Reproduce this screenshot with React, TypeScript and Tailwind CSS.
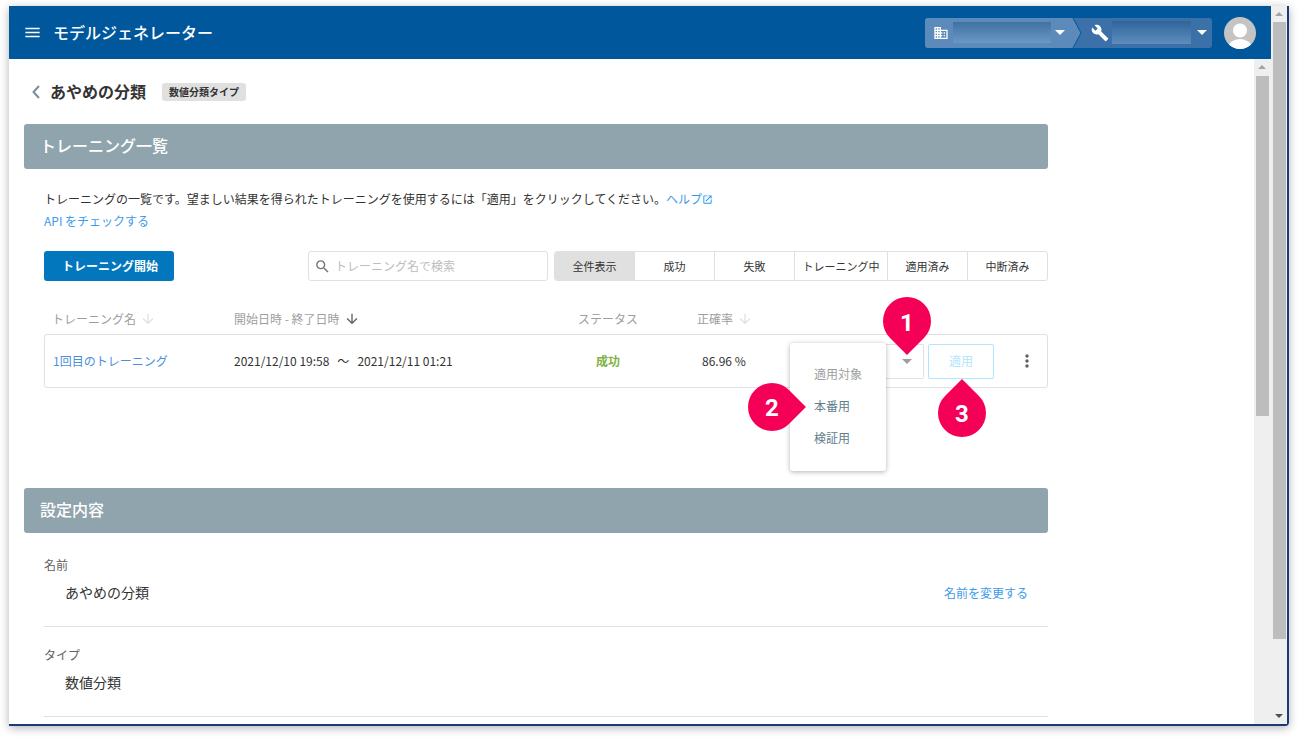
import { MdMenu, MdBuild, MdDomain, MdArrowDownward, MdMoreVert, MdSearch, MdOpenInNew } from 'react-icons/md';

const filters = [
  { name: '全件表示', width: 'w-[79px]', active: true },
  { name: '成功', width: 'w-[80px]' },
  { name: '失敗', width: 'w-[80px]' },
  { name: 'トレーニング中', width: 'w-[93px]' },
  { name: '適用済み', width: 'w-[80px]' },
  { name: '中断済み', width: 'w-[80px]' },
];

function Caret({ className }: { className: string }) {
  return <span className={`w-0 h-0 border-x-[5px] border-x-transparent border-t-[5px] ${className}`} />;
}

function SectionHead({ title }: { title: string }) {
  return (
    <div className="h-[45px] w-[1024px] ml-[15px] pl-[16px] pb-[4px] flex items-center bg-[#90a4ae] rounded-[3px] text-white text-base font-medium">
      {title}
    </div>
  );
}

function Pin({ label, className, rotate, textClass }: { label: string; className: string; rotate: string; textClass?: string }) {
  return (
    <div className={`absolute w-[48px] h-[48px] ${className}`}>
      <div className={`absolute inset-0 bg-[#f50057] rounded-full rounded-br-none ${rotate}`} />
      <span className={`absolute inset-0 flex items-center justify-center text-white text-2xl font-bold font-['Roboto',sans-serif] ${textClass ?? ''}`}>{label}</span>
    </div>
  );
}

export default function App() {
  return (
    <div className="relative w-[1298px] h-[738px] overflow-hidden bg-white text-[#333] font-['Noto_Sans_CJK_JP','Roboto',sans-serif]">
      <div className="absolute left-[9px] top-[6px] w-[1280px] h-[720px] flex bg-white border-r-2 border-b-2 border-[#1d3a78] rounded-br-[4px] shadow-[0_2px_10px_rgba(0,0,0,0.3)]">
        <div className="w-[1262px] h-full flex flex-col overflow-hidden">
          <header className="h-[53px] shrink-0 bg-[#01579b] flex items-center text-white">
            <MdMenu size={19} className="ml-[14px]" />
            <span className="ml-[11px] pb-[2px] text-base font-medium">モデルジェネレーター</span>
            <div className="ml-auto flex items-center h-[30px] w-[287px] rounded-[3px] overflow-hidden relative bg-[#3b70a8]">
              <div className="w-[148px] h-full bg-[#5c8aba] flex items-center pl-[8px] shrink-0">
                <MdDomain size={16} />
                <div className="ml-[4px] w-[98px] h-[21px] bg-gradient-to-b from-[#3f72a4] to-[#6b97c2]" />
                <Caret className="ml-[4px] border-t-white" />
              </div>
              <svg className="absolute left-[146px] top-0" width="12" height="30" viewBox="0 0 12 30">
                <path d="M0 0 L2 0 L10 15 L2 30 L0 30 Z" fill="#5c8aba" />
                <path d="M2 0 L10 15 L2 30" fill="none" stroke="#01579b" strokeWidth="1" />
              </svg>
              <MdBuild size={18} className="ml-[18px] shrink-0" />
              <div className="ml-[3px] w-[79px] h-[23px] bg-gradient-to-b from-[#2f659c] to-[#5d8ebc]" />
              <Caret className="ml-[6px] border-t-white" />
            </div>
            <svg className="ml-[12px] mr-[15px] rounded-full shrink-0" width="32" height="32" viewBox="0 0 32 32">
              <rect width="32" height="32" fill="#c4c4c4" />
              <circle cx="16" cy="13.5" r="7" fill="#fff" />
              <ellipse cx="16" cy="31" rx="12" ry="9" fill="#fff" />
            </svg>
          </header>
          <div className="flex-1 flex min-h-0">
            <main className="relative w-[1245px] overflow-hidden">
              <div className="h-[65px] flex items-center">
                <svg className="ml-[22px]" width="10" height="14" viewBox="0 0 10 14">
                  <path d="M8 1 L2.5 7 L8 13" fill="none" stroke="#78909c" strokeWidth="2" />
                </svg>
                <h1 className="ml-[9px] pb-[2px] text-base font-bold text-[#333]">あやめの分類</h1>
                <span className="ml-[16px] h-[18px] w-[84px] flex items-center justify-center rounded-[3px] bg-[#e0e0e0] text-[10px] font-bold">
                  数値分類タイプ
                </span>
              </div>
              <SectionHead title="トレーニング一覧" />
              <div className="pl-[35px] w-[1039px]">
                <p className="mt-[20px] h-[20px] flex items-center text-xs">
                  トレーニングの一覧です。望ましい結果を得られたトレーニングを使用するには「適用」をクリックしてください。
                  <a className="text-[#3d9be9]">ヘルプ</a>
                  <MdOpenInNew size={11} className="text-[#2196f3]" />
                </p>
                <a className="mt-[2px] h-[20px] flex items-center text-xs text-[#3d9be9]">API をチェックする</a>
                <div className="mt-[20px] flex items-center">
                  <button className="w-[130px] h-[30px] pl-[2px] bg-[#0277bd] rounded-[3px] text-white text-xs font-bold">トレーニング開始</button>
                  <div className="ml-[134px] w-[240px] h-[30px] flex items-center border border-[#e0e0e0] rounded-[3px] pl-[5px] text-xs text-[#bdbdbd]">
                    <MdSearch size={17} className="text-[#757575]" />
                    <span className="ml-[4px]">トレーニング名で検索</span>
                  </div>
                  <div className="ml-[6px] h-[30px] flex border border-[#e0e0e0] rounded-[3px] overflow-hidden text-[11px]">
                    {filters.map((f, i) => (
                      <div
                        key={f.name}
                        className={`${f.width} flex items-center justify-center ${i > 0 ? 'border-l border-[#e0e0e0]' : ''} ${f.active ? 'bg-[#e0e0e0]' : ''}`}
                      >
                        {f.name}
                      </div>
                    ))}
                  </div>
                </div>
                <div className="mt-[27px] h-[22px] flex items-center text-xs text-[#9e9e9e]">
                  <div className="w-[190px] pl-[8px] flex items-center gap-[4px]">
                    トレーニング名
                    <MdArrowDownward size={16} className="text-[#e0e0e0]" />
                  </div>
                  <div className="w-[344px] flex items-center gap-[4px]">
                    開始日時 - 終了日時
                    <MdArrowDownward size={16} className="text-[#616161]" />
                  </div>
                  <div className="w-[119px]">ステータス</div>
                  <div className="flex items-center gap-[4px]">
                    正確率
                    <MdArrowDownward size={16} className="text-[#e0e0e0]" />
                  </div>
                </div>
                <div className="mt-[4px] h-[54px] flex items-center border border-[#e0e0e0] rounded-[3px] text-xs">
                  <a className="w-[189px] pl-[8px] text-[#4a90d9]">1回目のトレーニング</a>
                  <div className="w-[344px]">
                    2021/12/10 19:58<span className="mx-[8px]">〜</span>2021/12/11 01:21
                  </div>
                  <div className="w-[60px] pl-[18px] font-bold text-[#7cb342] whitespace-nowrap">成功</div>
                  <div className="ml-[64px] w-[60px] whitespace-nowrap">86.96 %</div>
                  <div className="ml-[118px] w-[44px] h-[35px] flex items-center justify-end pr-[11px] border border-l-0 border-[#e0e0e0] rounded-r-[2px]">
                    <Caret className="border-t-[#9e9e9e]" />
                  </div>
                  <button className="ml-[4px] w-[66px] h-[35px] border border-[#b3e5fc] rounded-[2px] text-[#b3e5fc]">適用</button>
                  <MdMoreVert size={20} className="ml-[23px] text-[#616161]" />
                </div>
              </div>
              <div className="mt-[100px]">
                <SectionHead title="設定内容" />
              </div>
              <div className="ml-[35px] w-[1004px]">
                <div className="h-[94px] border-b border-[#e0e0e0] pt-[23px]">
                  <div className="text-xs text-[#616161] leading-[18px]">名前</div>
                  <div className="mt-[8px] flex items-center justify-between pl-[21px] pr-[20px]">
                    <span className="text-sm">あやめの分類</span>
                    <a className="pt-[2px] text-xs text-[#3d9be9]">名前を変更する</a>
                  </div>
                </div>
                <div className="h-[90px] border-b border-[#e0e0e0] pt-[19px]">
                  <div className="text-xs text-[#616161] leading-[18px]">タイプ</div>
                  <div className="mt-[8px] pl-[21px] text-sm">数値分類</div>
                </div>
              </div>

              <div className="absolute left-[781px] top-[284px] w-[96px] h-[128px] bg-white rounded-[3px] shadow-[0_1px_5px_rgba(0,0,0,0.3)] text-xs pl-[24px] pt-[15px]">
                <div className="h-[32px] flex items-center text-[#9e9e9e]">適用対象</div>
                <div className="h-[32px] flex items-center text-[#607d8b]">本番用</div>
                <div className="h-[32px] flex items-center text-[#607d8b]">検証用</div>
              </div>
              <Pin label="1" className="left-[874px] top-[238px]" rotate="rotate-45" textClass="pt-[3px]" />
              <Pin label="2" className="left-[739px] top-[324px]" rotate="-rotate-45" textClass="pt-[1px]" />
              <Pin label="3" className="left-[929px] top-[330px]" rotate="-rotate-135" textClass="pt-[1px]" />
            </main>
            <div className="relative w-[17px] bg-[#efefef]">
              <span className="absolute left-[4px] top-[6px] w-0 h-0 border-x-[4px] border-x-transparent border-b-[4px] border-b-[#a3a3a3]" />
              <div className="absolute left-[2px] top-[17px] w-[13px] h-[340px] bg-[#bdbdbd]" />
            </div>
          </div>
        </div>
        <div className="relative w-[16px] bg-[#efefef]">
          <span className="absolute left-[4px] top-[6px] w-0 h-0 border-x-[4px] border-x-transparent border-b-[4px] border-b-[#a3a3a3]" />
          <div className="absolute left-[2px] top-[16px] w-[13px] h-[617px] bg-[#bdbdbd]" />
          <span className="absolute left-[4px] top-[708px] w-0 h-0 border-x-[4px] border-x-transparent border-t-[4px] border-t-[#505050]" />
        </div>
      </div>
    </div>
  );
}
